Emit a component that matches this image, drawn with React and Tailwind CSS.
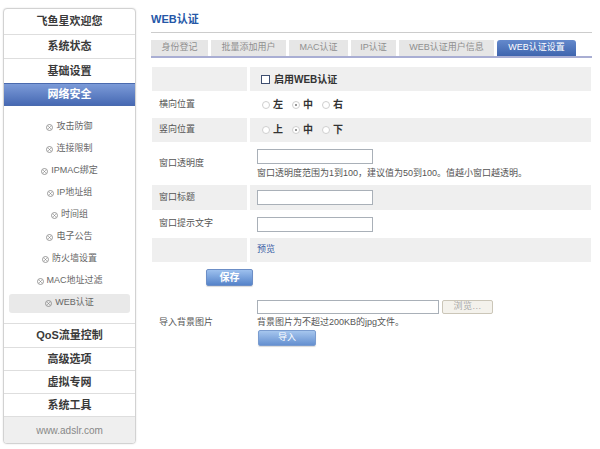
import React from "react";

const FONT = "font-['Liberation_Sans','Noto_Sans_CJK_SC',sans-serif]";

function XIcon() {
  return (
    <svg width="7" height="7" viewBox="0 0 8 8" className="mr-[3px] shrink-0">
      <circle cx="4" cy="4" r="3.4" fill="none" stroke="#8a8a8a" strokeWidth="1" />
      <path d="M2.6 2.6 L5.4 5.4 M5.4 2.6 L2.6 5.4" stroke="#8a8a8a" strokeWidth="0.9" />
    </svg>
  );
}

function Radio({ checked, label }) {
  return (
    <div className="flex items-center mr-[9px]">
      <div className="w-[8px] h-[8px] rounded-full border border-[#cfcfcf] bg-white flex items-center justify-center">
        {checked && <div className="w-[2px] h-[2px] rounded-full bg-[#777]" />}
      </div>
      <span className="ml-[3px] text-[10px] font-semibold text-[#333] leading-[12px]">{label}</span>
    </div>
  );
}

const subItems = ["攻击防御", "连接限制", "IPMAC绑定", "IP地址组", "时间组", "电子公告", "防火墙设置", "MAC地址过滤", "WEB认证"];

const HEAD = "flex items-center justify-center text-[11px] font-semibold text-[#3a3a3a]";

function Sidebar() {
  return (
    <div className="ml-[3px] mt-[8px] w-[133px] h-[436px] border border-[#d2d2d2] rounded-[4px] shadow-[0_0_2px_rgba(0,0,0,0.12)] flex flex-col overflow-hidden bg-white shrink-0">
      <div className={`h-[26px] border-b border-[#dedede] ${HEAD}`}>飞鱼星欢迎您</div>
      <div className={`h-[24px] border-b border-[#dedede] ${HEAD}`}>系统状态</div>
      <div className={`h-[24px] ${HEAD}`}>基础设置</div>
      <div className="h-[23px] flex items-center justify-center text-[11px] font-semibold text-white bg-gradient-to-b from-[#7c9bd8] to-[#4769b3] border-y border-[#4a6aae]">网络安全</div>
      <div className="pt-[10px] pb-[9px] border-b border-[#dedede] flex flex-col">
        {subItems.map((s) => (
          <div key={s} className="h-[22px] flex items-center">
            {s === "WEB认证" ? (
              <div className="mx-[5px] w-full h-[19px] rounded-[3px] bg-[#e9e9e9] flex items-center justify-center text-[9px] text-[#666]">
                <XIcon />
                {s}
              </div>
            ) : (
              <div className="w-full flex items-center justify-center text-[9px] text-[#666]">
                <XIcon />
                {s}
              </div>
            )}
          </div>
        ))}
      </div>
      <div className={`h-[24px] border-b border-[#dedede] ${HEAD}`}>QoS流量控制</div>
      <div className={`h-[23px] border-b border-[#dedede] ${HEAD}`}>高级选项</div>
      <div className={`h-[23px] border-b border-[#dedede] ${HEAD}`}>虚拟专网</div>
      <div className={`h-[23px] border-b border-[#dedede] ${HEAD}`}>系统工具</div>
      <div className="flex-1 bg-[#efefef] flex items-center justify-center text-[10px] text-[#888]">www.adslr.com</div>
    </div>
  );
}

const tabs = [
  { t: "身份登记", w: "w-[57px]" },
  { t: "批量添加用户", w: "w-[75px]" },
  { t: "MAC认证", w: "w-[59px]" },
  { t: "IP认证", w: "w-[45px]" },
  { t: "WEB认证用户信息", w: "w-[95px]" },
];

function Input({ w = "w-[116px]" }) {
  return <div className={`${w} h-[15px] border border-[#a9b0b8] bg-white`} />;
}

export default function App() {
  return (
    <div className={`w-[600px] h-[449px] bg-white flex ${FONT}`}>
      <Sidebar />
      <div className="ml-[15px] w-[441px] pt-[12px]">
        <div className="pb-[6px] border-b border-[#cccccc]">
          <div className="h-[14px] leading-[14px] text-[11px] font-bold text-[#2557a7]">WEB认证</div>
        </div>
        <div className="mt-[7px] flex gap-[3px] border-b-2 border-[#a9aed3]">
          {tabs.map((x) => (
            <div key={x.t} className={`${x.w} h-[16px] bg-[#e6e6e6] flex items-center justify-center text-[9px] text-[#8f8f8f]`}>{x.t}</div>
          ))}
          <div className="w-[79px] h-[16px] rounded-t-[3px] bg-gradient-to-b from-[#6489cc] to-[#3f65ae] flex items-center justify-center text-[9px] text-white">WEB认证设置</div>
        </div>

        <div className="mt-[9px] ml-[1px] w-[439px] flex flex-col text-[9px] text-[#555]">
          <div className="flex gap-[3px] h-[24px]">
            <div className="w-[95px] bg-[#efefef]" />
            <div className="flex-1 bg-[#efefef] flex items-center pl-[11px]">
              <div className="w-[9px] h-[9px] border border-[#3e4e70] bg-white" />
              <span className="ml-[4px] text-[10px] font-semibold text-[#333]">启用WEB认证</span>
            </div>
          </div>
          <div className="flex gap-[3px] h-[27px]">
            <div className="w-[95px] flex items-center pl-[7px]">横向位置</div>
            <div className="flex-1 flex items-center pl-[12px]">
              <Radio label="左" />
              <Radio label="中" checked />
              <Radio label="右" />
            </div>
          </div>
          <div className="flex gap-[3px] h-[24px]">
            <div className="w-[95px] bg-[#efefef] flex items-center pl-[7px]">竖向位置</div>
            <div className="flex-1 bg-[#efefef] flex items-center pl-[12px]">
              <Radio label="上" />
              <Radio label="中" checked />
              <Radio label="下" />
            </div>
          </div>
          <div className="flex gap-[3px] h-[43px]">
            <div className="w-[95px] flex items-center pl-[7px]">窗口透明度</div>
            <div className="flex-1 flex flex-col pl-[7px] pt-[7px]">
              <Input />
              <div className="mt-[3px] leading-[12px]">窗口透明度范围为1到100，建议值为50到100。值越小窗口越透明。</div>
            </div>
          </div>
          <div className="flex gap-[3px] h-[25px]">
            <div className="w-[95px] bg-[#efefef] flex items-center pl-[7px]">窗口标题</div>
            <div className="flex-1 bg-[#efefef] flex items-center pl-[7px]">
              <Input />
            </div>
          </div>
          <div className="flex gap-[3px] h-[28px]">
            <div className="w-[95px] flex items-center pl-[7px]">窗口提示文字</div>
            <div className="flex-1 flex items-center pl-[7px]">
              <Input />
            </div>
          </div>
          <div className="flex gap-[3px] h-[24px]">
            <div className="w-[95px] bg-[#efefef]" />
            <div className="flex-1 bg-[#efefef] flex items-center pl-[7px] text-[#3a5ea6]">预览</div>
          </div>
        </div>

        <div className="mt-[7px] ml-[55px] w-[47px] h-[17px] rounded-[2px] border border-[#6c8ec6] bg-gradient-to-b from-[#9dc0ee] to-[#5583c9] shadow-[0_1px_1px_rgba(0,0,0,0.15)] flex items-center justify-center text-[10px] font-bold text-white">保存</div>

        <div className="mt-[14px] flex text-[9px] text-[#555]">
          <div className="w-[106px] flex items-center pl-[8px]">导入背景图片</div>
          <div className="flex flex-col">
            <div className="flex">
              <div className="w-[182px] h-[14px] border border-[#a9b0b8] bg-white" />
              <div className="ml-[3px] w-[51px] h-[14px] border border-[#cbc6b8] rounded-[2px] bg-[#f4f2ec] flex items-center justify-center text-[9px] text-[#a8a8a8] tracking-[0.5px]">浏览...</div>
            </div>
            <div className="mt-[2px] leading-[12px]">背景图片为不超过200KB的jpg文件。</div>
            <div className="mt-[2px] ml-[1px] w-[58px] h-[16px] rounded-[2px] border border-[#7a9ccf] bg-gradient-to-b from-[#a6c6ee] to-[#6590d0] shadow-[0_1px_1px_rgba(0,0,0,0.15)] flex items-center justify-center text-[9px] text-white">导入</div>
          </div>
        </div>
      </div>
    </div>
  );
}
